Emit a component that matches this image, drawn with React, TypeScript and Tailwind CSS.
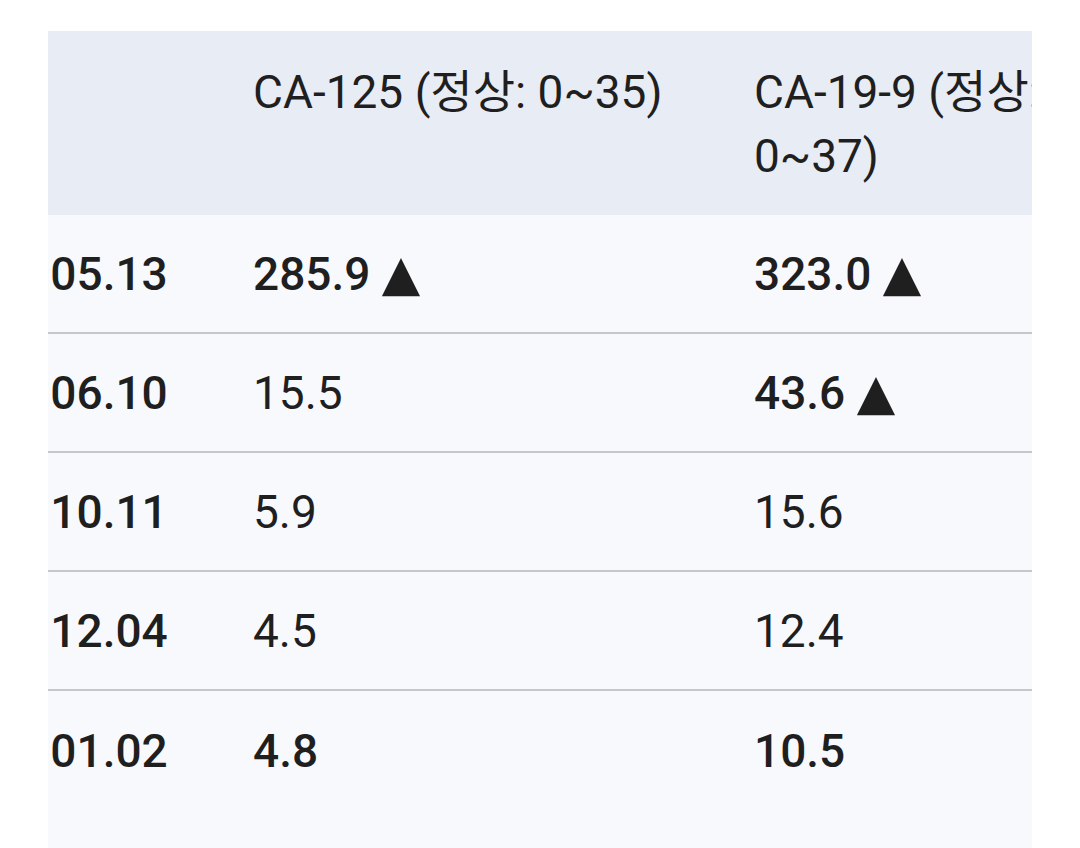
import React from "react";

type Cell = { v: string; up?: boolean; bold?: boolean };
type Row = { date: string; a: Cell; b: Cell };

const rows: Row[] = [
  { date: "2023.05.13", a: { v: "285.9", up: true, bold: true }, b: { v: "323.0", up: true, bold: true } },
  { date: "2023.06.10", a: { v: "15.5" }, b: { v: "43.6", up: true, bold: true } },
  { date: "2023.10.11", a: { v: "5.9" }, b: { v: "15.6" } },
  { date: "2023.12.04", a: { v: "4.5" }, b: { v: "12.4" } },
  { date: "2024.01.02", a: { v: "4.8", bold: true }, b: { v: "10.5", bold: true } },
];

function Value({ c }: { c: Cell }) {
  return (
    <span className={c.bold ? "font-medium" : "font-normal"}>
      {c.v}
      {c.up ? (
        <>
          {" "}
          <span className="font-['DejaVu_Sans',sans-serif] text-[50px] font-normal">▲</span>
        </>
      ) : null}
    </span>
  );
}

export default function App() {
  return (
    <div className="min-h-screen bg-white px-[48px] pt-[31px] font-[Roboto,'Noto_Sans_CJK_KR',sans-serif] text-[#1f1f1f]">
      <div className="w-[984px] overflow-hidden bg-[#f8f9fd] pb-[40px]">
        <div className="-ml-[139px] w-[1322px] text-[46px] leading-[64px]">
          <div className="grid grid-cols-[320px_501px_501px] bg-[#e8ecf5]">
            <div className="px-[24px] pb-[27px] pt-[29px]"></div>
            <div className="whitespace-nowrap px-[24px] pb-[27px] pt-[29px]">CA-125 (정상: 0~35)</div>
            <div className="whitespace-nowrap px-[24px] pb-[27px] pt-[29px]">
              CA-19-9 (정상:
              <br />
              0~37)
            </div>
          </div>
          {rows.map((r, i) => (
            <div
              key={r.date}
              className={
                i < rows.length - 1
                  ? "grid h-[119px] grid-cols-[320px_501px_501px] border-b-2 border-[#c7c7c7]"
                  : "grid h-[119px] grid-cols-[320px_501px_501px]"
              }
            >
              <div className="flex items-center whitespace-nowrap px-[24px] font-medium">{r.date}</div>
              <div className="flex items-center whitespace-nowrap px-[24px]">
                <Value c={r.a} />
              </div>
              <div className="flex items-center whitespace-nowrap px-[24px]">
                <Value c={r.b} />
              </div>
            </div>
          ))}
        </div>
      </div>
    </div>
  );
}
